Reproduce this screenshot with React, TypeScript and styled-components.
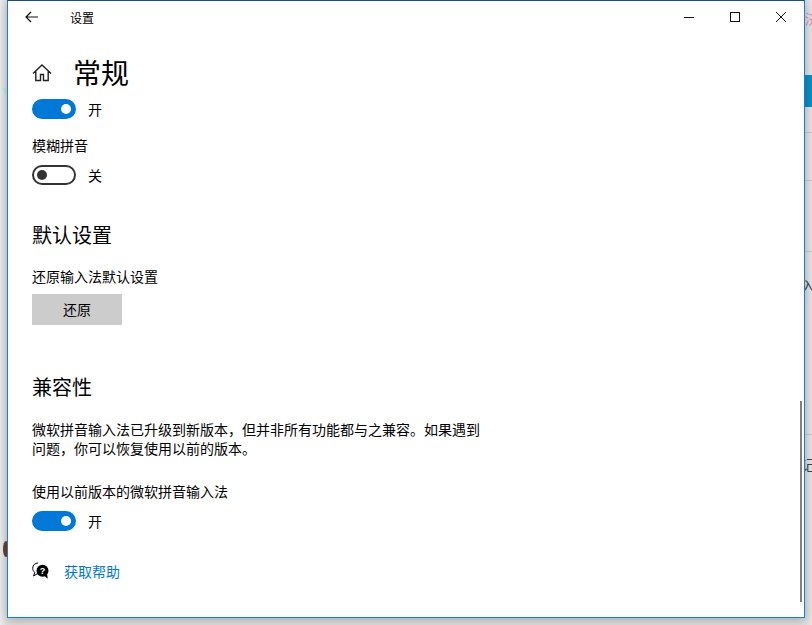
import { createGlobalStyle, styled } from "styled-components"

const GlobalStyle = createGlobalStyle`
  html, body {
    margin: 0;
    padding: 0;
    background: #e4e4e4;
  }
  body {
    font-family: "Noto Sans CJK SC", "Liberation Sans", sans-serif;
    color: #000;
  }
`

function Toggle({ on, top }: { on: boolean; top: number }) {
  return (
    <ToggleRow $top={top}>
      <Track $on={on}>
        <Knob $on={on} />
      </Track>
      <ToggleLabel>{on ? "开" : "关"}</ToggleLabel>
    </ToggleRow>
  )
}

function App() {
  return (
    <>
      <GlobalStyle />
      <Desktop>
        <Teal />
        <Blob />
        <PinkGlyph>济</PinkGlyph>
        <BlueBand />
        <BackdropLine $y={132} />
        <BackdropLine $y={180} />
        <BackdropLine $y={251} />
        <BackdropLine $y={434} />
        <BackdropGlyph $y={275}>入</BackdropGlyph>
        <BackdropGlyph $y={454}>记</BackdropGlyph>
        <Window>
          <TitleBar>
            <BackButton>
              <svg width="14" height="12" viewBox="0 0 14 12" fill="none" stroke="#111" strokeWidth="1.2">
                <path d="M13 6H1M6 1 1 6l5 5" />
              </svg>
            </BackButton>
            <TitleText>设置</TitleText>
            <WindowButtons>
              <WindowButton>
                <svg width="12" height="12" viewBox="0 0 12 12" stroke="#111" strokeWidth="1">
                  <path d="M1 6.500h10" />
                </svg>
              </WindowButton>
              <WindowButton>
                <svg width="12" height="12" viewBox="0 0 12 12" fill="none" stroke="#111" strokeWidth="1">
                  <rect x="1.500" y="1.500" width="9" height="9" />
                </svg>
              </WindowButton>
              <WindowButton>
                <svg width="12" height="12" viewBox="0 0 12 12" stroke="#111" strokeWidth="1">
                  <path d="M1 1l10 10M11 1 1 11" />
                </svg>
              </WindowButton>
            </WindowButtons>
          </TitleBar>
          <Content>
            <PageHeader>
              <svg width="20" height="20" viewBox="0 0 20 20" fill="none" stroke="#222" strokeWidth="1.400">
                <path d="M1 10.500 10 2l9 8.500M3.800 8.500v9h4.700v-6h3v6h4.700v-9" />
              </svg>
              <PageTitle>常规</PageTitle>
            </PageHeader>
            <Toggle on top={6} />
            <FieldLabel $top={16}>模糊拼音</FieldLabel>
            <Toggle on={false} top={10} />
            <SectionTitle $top={36}>默认设置</SectionTitle>
            <FieldLabel $top={17}>还原输入法默认设置</FieldLabel>
            <ResetButton>还原</ResetButton>
            <SectionTitle $top={48}>兼容性</SectionTitle>
            <Paragraph>
              微软拼音输入法已升级到新版本，但并非所有功能都与之兼容。如果遇到问题，你可以恢复使用以前的版本。
            </Paragraph>
            <FieldLabel $top={23}>使用以前版本的微软拼音输入法</FieldLabel>
            <Toggle on top={10} />
            <HelpRow>
              <svg width="18" height="18" viewBox="0 0 18 18">
                <path d="M6 1C3 1 .7 3.200.7 6.200c0 1.800.8 3.300 2.100 4.300L1.500 14l3.700-2.200c1.500.3 3 .1 4-.6" fill="#fff" stroke="#000" strokeWidth="1" />
                <circle cx="10.500" cy="8.700" r="6" fill="#000" />
                <path d="M12.500 14l3.300 2.800-.8-5z" fill="#000" />
                <HelpMark x="10.500" y="12">?</HelpMark>
              </svg>
              <HelpLink>获取帮助</HelpLink>
            </HelpRow>
          </Content>
          <ScrollThumb />
        </Window>
      </Desktop>
    </>
  )
}

export default App

const Desktop = styled.div`
  position: relative;
  width: 812px;
  height: 625px;
  overflow: hidden;
  background: linear-gradient(to right, #ececec 0, #dedede 7px, #dedede 805px, #e6e6e6 812px);
  padding: 0 7px;
  box-sizing: border-box;
`
const Teal = styled.div`
  position: absolute;
  left: 2px;
  top: 88px;
  width: 6px;
  height: 12px;
  background: #c3e8de;
  clip-path: polygon(0 0, 100% 0, 100% 100%);
`
const Blob = styled.div`
  position: absolute;
  left: 3px;
  top: 541px;
  width: 6px;
  height: 16px;
  border-radius: 50%;
  background: #6b4226;
`
const PinkGlyph = styled.div`
  position: absolute;
  left: 805px;
  top: 8px;
  font-size: 14px;
  color: #e58cae;
`
const BlueBand = styled.div`
  position: absolute;
  left: 805px;
  top: 75px;
  width: 7px;
  height: 32px;
  background: #0a8fc4;
`
const BackdropLine = styled.div<{ $y: number }>`
  position: absolute;
  left: 805px;
  top: ${(p) => p.$y}px;
  width: 7px;
  height: 1px;
  background: #c8c8c8;
`
const BackdropGlyph = styled.div<{ $y: number }>`
  position: absolute;
  left: 801px;
  top: ${(p) => p.$y}px;
  font-size: 14px;
  color: #444;
`
const Window = styled.div`
  position: relative;
  width: 798px;
  height: 618px;
  box-sizing: border-box;
  background: #fff;
  border: 1px solid #1a7fd0;
  border-top-color: #1a5080;
  box-shadow: 0 2px 10px rgba(0, 0, 0, 0.25);
  display: flex;
  flex-direction: column;
`
const TitleBar = styled.div`
  height: 32px;
  flex: none;
  display: flex;
  align-items: center;
`
const BackButton = styled.div`
  width: 48px;
  height: 32px;
  display: flex;
  align-items: center;
  justify-content: center;
`
const TitleText = styled.div`
  margin-left: 14px;
  font-size: 12px;
`
const WindowButtons = styled.div`
  margin-left: auto;
  display: flex;
`
const WindowButton = styled.div`
  width: 46px;
  height: 32px;
  display: flex;
  align-items: center;
  justify-content: center;
`
const Content = styled.div`
  padding: 0 24px;
  flex: 1;
`
const PageHeader = styled.div`
  display: flex;
  align-items: center;
  height: 40px;
  margin-top: 20px;
`
const PageTitle = styled.h1`
  margin: 0 0 2px 21px;
  font-size: 28px;
  font-weight: 400;
  line-height: 38px;
`
const ToggleRow = styled.div<{ $top: number }>`
  display: flex;
  align-items: center;
  margin-top: ${(p) => p.$top}px;
  height: 20px;
`
const Track = styled.div<{ $on: boolean }>`
  width: 44px;
  height: 20px;
  box-sizing: border-box;
  border-radius: 10px;
  display: flex;
  align-items: center;
  padding: 0 3px;
  justify-content: ${(p) => (p.$on ? "flex-end" : "flex-start")};
  background: ${(p) => (p.$on ? "#0078d7" : "#fff")};
  border: 2px solid ${(p) => (p.$on ? "#0078d7" : "#333")};
`
const Knob = styled.div<{ $on: boolean }>`
  width: 10px;
  height: 10px;
  border-radius: 50%;
  background: ${(p) => (p.$on ? "#fff" : "#333")};
`
const ToggleLabel = styled.span`
  margin-left: 12px;
  font-size: 14px;
`
const FieldLabel = styled.div<{ $top: number }>`
  margin-top: ${(p) => p.$top}px;
  font-size: 14px;
  line-height: 20px;
`
const SectionTitle = styled.h2<{ $top: number }>`
  margin: ${(p) => p.$top}px 0 0;
  font-size: 20px;
  font-weight: 400;
  line-height: 28px;
`
const ResetButton = styled.div`
  width: 90px;
  height: 31px;
  margin-top: 8px;
  padding-bottom: 2px;
  box-sizing: border-box;
  background: #cccccc;
  font-size: 14px;
  display: flex;
  align-items: center;
  justify-content: center;
`
const Paragraph = styled.p`
  margin: 19px 0 0;
  width: 452px;
  font-size: 14px;
  line-height: 19px;
`
const HelpRow = styled.div`
  display: flex;
  align-items: center;
  margin-top: 30px;
  height: 20px;
`
const HelpMark = styled.text`
  font-family: "Liberation Sans", sans-serif;
  font-size: 9px;
  font-weight: 700;
  fill: #fff;
  text-anchor: middle;
`
const HelpLink = styled.span`
  margin-left: 14px;
  font-size: 14px;
  color: #0078d7;
`
const ScrollThumb = styled.div`
  position: absolute;
  right: 2px;
  top: 400px;
  width: 2px;
  height: 201px;
  background: #808080;
`
